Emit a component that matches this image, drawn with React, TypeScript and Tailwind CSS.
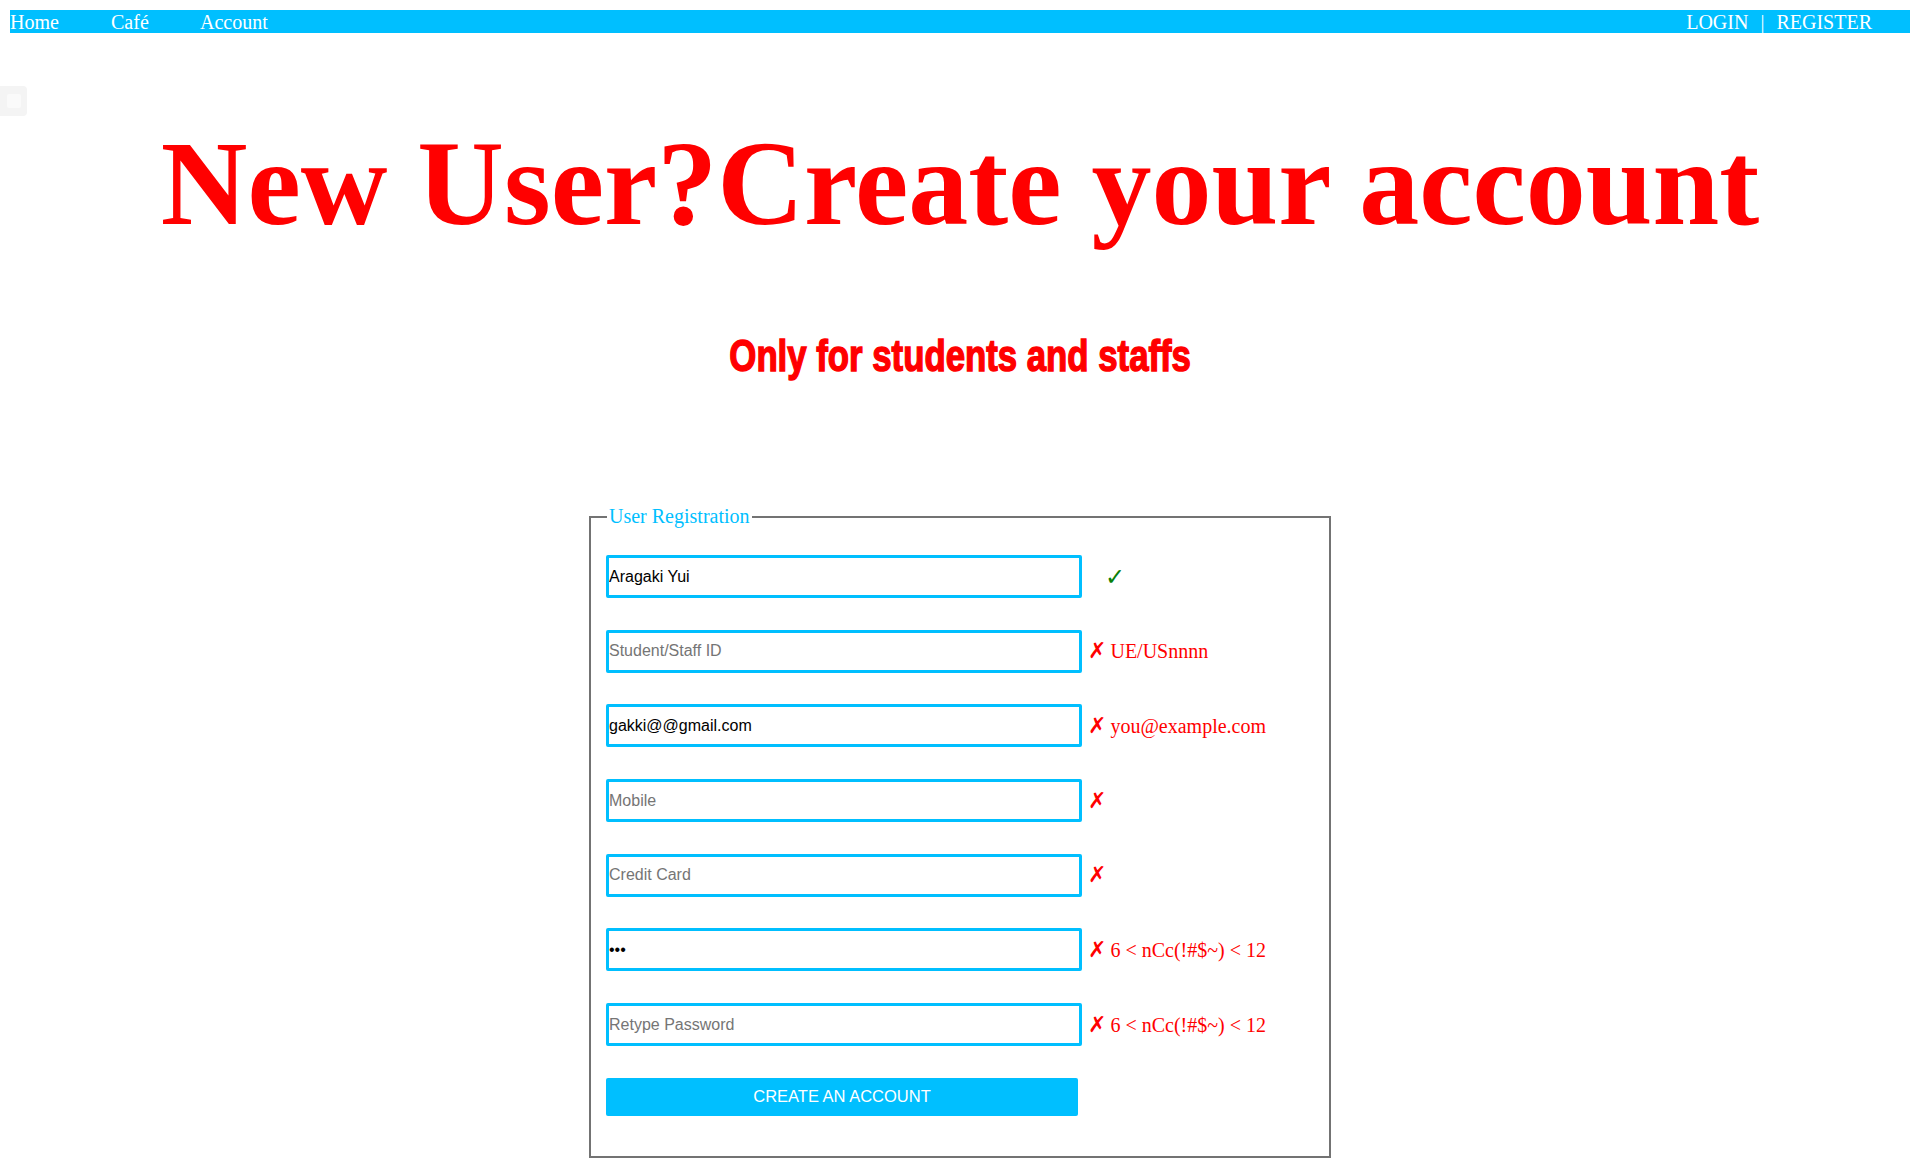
const fields = [
  { placeholder: 'Name', value: 'Aragaki Yui', ok: true, msg: '' },
  { placeholder: 'Student/Staff ID', value: '', ok: false, msg: 'UE/USnnnn' },
  { placeholder: 'Email', value: 'gakki@@gmail.com', ok: false, msg: 'you@example.com' },
  { placeholder: 'Mobile', value: '', ok: false, msg: '' },
  { placeholder: 'Credit Card', value: '', ok: false, msg: '' },
  { placeholder: 'Password', value: 'abc', ok: false, msg: '6 < nCc(!#$~) < 12', password: true },
  { placeholder: 'Retype Password', value: '', ok: false, msg: '6 < nCc(!#$~) < 12', password: true },
];

// fields whose placeholder isn't visible in the shot (they are filled)
const hidden = ['Name', 'Email', 'Password'];

const serif = "font-['Liberation_Serif','Times_New_Roman',serif]";

export default function App() {
  return (
    <div className="min-h-[1170px] bg-white px-[10px] pt-[10px]">
      {/* top nav */}
      <nav
        className={`flex h-[23px] items-center bg-[#00bfff] pr-[38px] text-[20px] leading-none text-white ${serif}`}
      >
        <a className="w-[101px]">Home</a>
        <a className="w-[89px]">Café</a>
        <a>Account</a>
        <div className="ml-auto flex items-center gap-[12px]">
          <a>LOGIN</a>
          <span>|</span>
          <a>REGISTER</a>
        </div>
      </nav>

      {/* little widget */}
      <div className="-ml-[10px] mt-[53px] flex h-[30px] w-[27px] items-center justify-center rounded-r-[4px] bg-[#f4f4f4]">
        <div className="h-[14px] w-[14px] rounded-[2px] bg-[#fafafa]" />
      </div>

      <h1
        className={`mt-[8px] text-center text-[120px] font-bold leading-none text-[#ff0000] ${serif}`}
      >
        New User?Create your account
      </h1>

      <div className="mt-[90px] text-center">
        <span className="inline-block scale-x-[0.79] font-['Impact','Liberation_Sans',Arial,sans-serif] text-[44px] font-bold leading-none text-[#ff0000] [-webkit-text-stroke:1.5px_#ff0000]">
          Only for students and staffs
        </span>
      </div>

      <div className="mt-[127px] flex justify-center">
        <fieldset className="w-[742px] border-2 border-[#737373] px-[15px] pb-[40px]">
          <legend className={`ml-[1px] px-[2px] text-[20px] leading-[23px] text-[#00bfff] ${serif}`}>
            User Registration
          </legend>
          <div className="mt-[27px] flex flex-col gap-[31.7px]">
            {fields.map((f) => (
              <div key={f.placeholder} className="flex items-center">
                <input
                  type={f.password ? 'password' : 'text'}
                  defaultValue={f.value}
                  placeholder={hidden.includes(f.placeholder) ? '' : f.placeholder}
                  className="h-[43px] w-[476px] rounded-[2px] border-[3px] border-[#00bfff] px-0 font-['Liberation_Sans',Arial,sans-serif] text-[16px] text-black outline-none placeholder:text-[#757575]"
                />
                {f.ok ? (
                  <span className="ml-[23px] font-['DejaVu_Sans',sans-serif] text-[24px] font-bold leading-none text-[#0a800a]">
                    ✓
                  </span>
                ) : (
                  <span className="ml-[6px] flex items-center gap-[4px] text-[#ff0000]">
                    <span className="font-['DejaVu_Sans',sans-serif] text-[22px] font-bold leading-none">✗</span>
                    {f.msg && <span className={`text-[20px] ${serif}`}>{f.msg}</span>}
                  </span>
                )}
              </div>
            ))}
            <button className="h-[38px] w-[472px] rounded-[2px] bg-[#00bfff] font-['Liberation_Sans',Arial,sans-serif] text-[16.5px] text-white">
              CREATE AN ACCOUNT
            </button>
          </div>
        </fieldset>
      </div>
    </div>
  );
}
